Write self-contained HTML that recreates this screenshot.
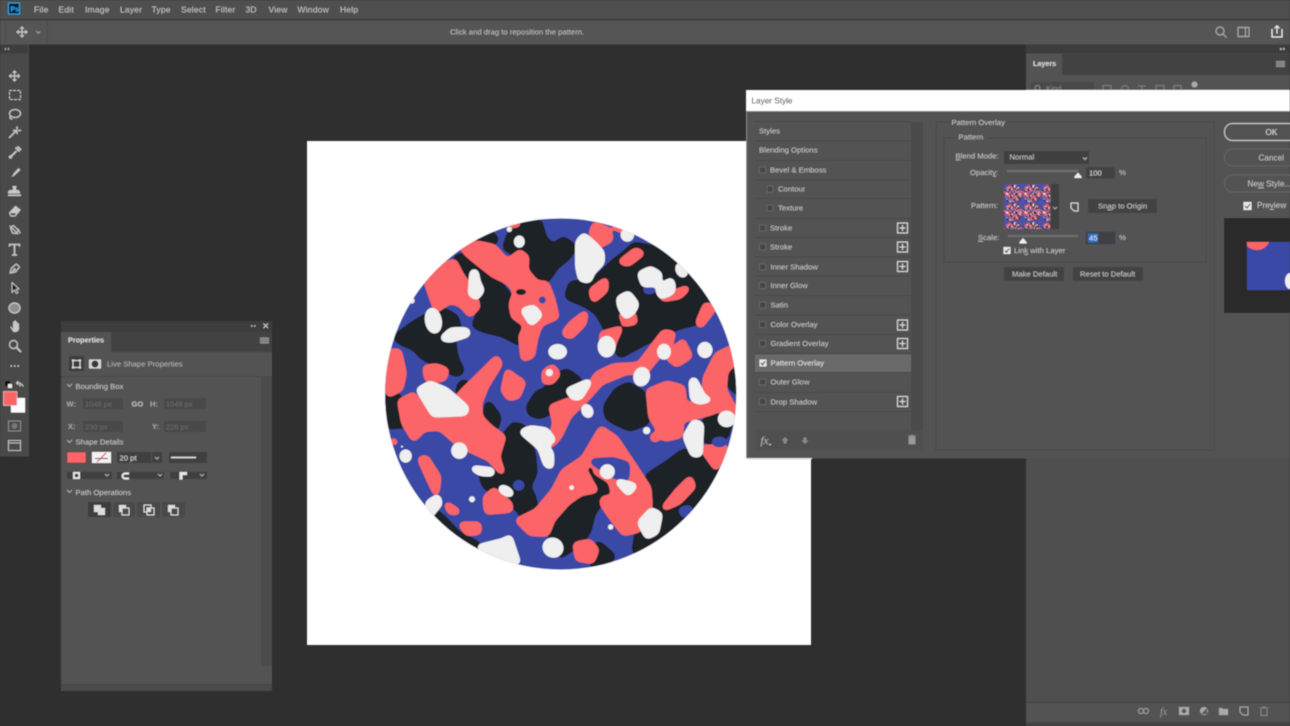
<!DOCTYPE html>
<html><head><meta charset="utf-8"><style>
html,body{margin:0;padding:0;background:#2f2f2f;width:1290px;height:726px;overflow:hidden}
svg{display:block;font-family:"Liberation Sans",sans-serif}
text{font-size:7.7px;fill:#c8c8c8}
.m text{font-size:8.5px;letter-spacing:.2px}
.d{fill:#8a8a8a}
.i{fill:none;stroke:#c8c8c8;stroke-width:1.2;stroke-linejoin:round;stroke-linecap:round}
.f{fill:#c8c8c8}
.k polygon{stroke:#1e2228;fill:#1e2228}
.c polygon{stroke:#fb6567;fill:#fb6567}
.w polygon{stroke:#efefef;fill:#efefef}
.k polygon,.c polygon,.w polygon,.b polygon{stroke-width:14;stroke-linejoin:round}
.b polygon{stroke:#3b4aa6;fill:#3b4aa6}
</style></head><body>
<svg width="1290" height="726" viewBox="0 0 1290 726" xmlns="http://www.w3.org/2000/svg">
<defs>
<clipPath id="cc"><circle cx="542" cy="552" r="527"/></clipPath>
<filter id="goo" filterUnits="userSpaceOnUse" x="-40" y="-40" width="1180" height="1180" color-interpolation-filters="sRGB">
<feGaussianBlur stdDeviation="8"/>
<feColorMatrix type="matrix" values="1 0 0 0 0 0 1 0 0 0 0 0 1 0 0 0 0 0 16 -4.500"/>
</filter>
<filter id="gook" filterUnits="userSpaceOnUse" x="-40" y="-40" width="1180" height="1180" color-interpolation-filters="sRGB">
<feGaussianBlur stdDeviation="9"/>
<feColorMatrix type="matrix" values="1 0 0 0 0 0 1 0 0 0 0 0 1 0 0 0 0 0 16 -3"/>
</filter>
<g id="art">
<rect x="0" y="0" width="1095" height="1095" fill="#3b4aa6"/>
<g class="k" filter="url(#gook)">
<polygon points="392,75 440,42 475,38 490,90 520,115 550,92 578,112 562,138 525,168 500,205 470,215 440,215 425,185 415,130 380,112"/>
<polygon points="285,95 330,72 345,90 300,102"/>
<polygon points="232,145 262,140 302,175 342,210 382,255 398,305 425,342 440,352 418,395 372,370 312,355 288,345 305,300 302,270 272,232 245,192"/>
<polygon points="52,382 95,350 135,325 190,305 225,325 232,355 215,385 220,430 232,468 215,482 172,460 128,436 108,412 62,392"/>
<polygon points="20,565 55,562 62,622 78,642 30,645 18,610"/>
<polygon points="566,258 576,225 605,222 655,205 705,158 735,135 765,108 800,115 860,125 930,185 985,262 958,292 945,335 900,345 850,365 790,395 722,432 705,398 675,340 655,305 622,282"/>
<polygon points="450,592 475,552 500,545 522,505 560,488 595,512 575,530 555,560 528,588 508,602 480,615 455,608"/>
<polygon points="682,590 712,545 745,528 785,552 805,600 795,635 750,652 712,635 686,620"/>
<polygon points="368,692 402,648 428,655 436,682 455,732 460,788 440,830 458,868 462,895 430,912 402,878 352,846 318,826 308,795 345,785 362,775 362,720"/>
<polygon points="808,800 862,765 912,728 958,735 1012,795 975,870 920,940 850,1000 768,1022 778,960 805,900 815,860"/>
<polygon points="536,920 575,885 622,858 655,855 655,880 635,908 622,960 600,995 542,1032 512,965"/>
<polygon points="625,768 642,755 652,795 692,815 712,835 718,858 672,858 642,822"/>
<polygon points="975,640 1012,602 1022,556 1055,612 1035,675 1000,695 975,685"/>
<polygon points="1045,472 1075,462 1075,545 1050,520"/>
<polygon points="158,905 185,925 232,975 290,1005 240,1040 170,960"/>
<polygon points="655,1005 695,1040 645,1072 640,1040"/>
<polygon points="244,524 258,520 238,548"/>
<polygon points="325,585 352,622 345,650 322,625"/>
<polygon points="238,470 240,485 225,488"/>
</g>
<g class="c" filter="url(#goo)">
<polygon points="248,112 292,102 340,112 382,158 420,128 438,142 435,182 470,222 498,222 514,262 528,320 480,340 465,380 455,436 432,445 425,380 442,345 402,318 396,282 410,245 385,214 342,194 305,165 262,130"/>
<polygon points="142,218 182,172 222,156 240,192 280,252 292,290 270,312 245,282 210,270 170,298"/>
<polygon points="34,426 56,426 70,490 60,535 28,552 20,520"/>
<polygon points="138,474 170,470 198,482 190,505 150,510 142,505"/>
<polygon points="62,575 100,556 130,594 192,612 252,542 312,484 350,446 358,462 316,530 296,582 298,622 330,654 368,682 350,740 365,785 330,745 240,704 182,652 130,655 102,685 74,640"/>
<polygon points="384,486 394,496 428,518 412,558 388,563 372,540"/>
<polygon points="558,362 582,336 615,312 610,340 572,378 556,372"/>
<polygon points="516,592 560,575 608,562 652,494 702,470 778,466 802,434 852,368 878,372 864,408 826,446 796,484 740,484 662,516 618,566 566,616 538,676 522,696 506,706 528,640"/>
<polygon points="668,372 718,358 702,392 692,425 668,425"/>
<polygon points="808,544 862,522 906,534 912,590 975,575 978,505 1012,436 1055,415 1068,452 1035,482 1030,540 1062,598 1048,632 1018,585 1005,602 950,618 902,628 900,675 855,685 815,620"/>
<polygon points="866,442 908,396 928,438 890,462"/>
<polygon points="956,338 978,286 1000,295 962,345"/>
<polygon points="725,155 768,122 784,130 745,160"/>
<polygon points="636,242 676,212 675,240 642,268"/>
<polygon points="645,45 685,62 690,88 660,104 636,72"/>
<polygon points="846,262 920,236 898,258 855,265"/>
<polygon points="726,315 755,306 764,335 735,340"/>
<polygon points="416,932 472,904 522,844 552,786 612,746 664,658 706,686 766,776 804,834 808,890 776,958 732,968 694,918 668,880 672,866 706,866 694,812 650,786 645,752 605,770 628,812 645,840 602,848 562,876 516,928 500,970 452,968"/>
<polygon points="318,864 342,842 388,882 390,898 322,904"/>
<polygon points="122,748 138,745 174,802 168,848 148,806"/>
<polygon points="202,885 232,905 212,905"/>
<polygon points="246,945 295,945 295,965 262,968"/>
<polygon points="588,1005 628,997 648,1020 635,1052 595,1045"/>
<polygon points="895,842 930,808 938,830 896,874 855,892"/>
<polygon points="968,715 1035,712 1008,772"/>
<polygon points="386,46 415,42"/>
<polygon points="38,692 46,698"/>
<polygon points="705,50 730,62"/>
<polygon points="495,486 518,472 532,492 515,514 495,514"/>
<circle cx="825" cy="682" r="13" fill="#fb6567"/>
<circle cx="365" cy="73" r="6" fill="#fb6567"/>
<circle cx="386" cy="439" r="6" fill="#fb6567"/>
</g>
<g class="b" filter="url(#goo)">
<polygon points="640,755 700,752 740,764 738,805 700,795"/>
<polygon points="800,232 825,238 800,244"/>
<circle cx="487" cy="270" r="10" fill="#3b4aa6"/>
<ellipse cx="416" cy="826" rx="16" ry="14" fill="#3b4aa6"/>
<ellipse cx="1018" cy="696" rx="22" ry="13" fill="#3b4aa6"/>
<polygon points="905,900 930,895 912,915"/>
</g>
<ellipse cx="423" cy="246" rx="15" ry="9" fill="#1e2228"/>
<g class="w" filter="url(#goo)" fill="#efefef">
<polygon points="596,96 612,78 642,104 664,128 664,158 636,186 626,210 604,206 596,170"/>
<polygon points="782,192 812,178 838,194 832,220 792,222"/>
<polygon points="836,240 872,212 878,228 874,246 844,258"/>
<polygon points="718,266 745,252 768,282 758,304 738,318 722,290"/>
<polygon points="278,188 286,186 292,218 304,240 290,260 274,252"/>
<polygon points="432,302 460,294 478,315 455,338"/>
<polygon points="190,385 214,362 260,362 262,372 212,388"/>
<polygon points="118,540 150,522 198,542 258,594 254,608 162,612"/>
<polygon points="566,542 626,516 600,560 582,562"/>
<polygon points="936,514 942,510 972,568 985,568 958,574 940,566"/>
<polygon points="918,680 942,638 962,644 958,732 940,732"/>
<polygon points="428,666 452,656 498,662 518,690 490,702 512,730 512,768 500,764 482,712"/>
<polygon points="282,776 335,782 335,790 302,788"/>
<polygon points="716,816 762,828 745,848"/>
<polygon points="782,938 815,902 838,914 828,965 802,978"/>
<polygon points="145,880 172,862 178,880 150,915"/>
<polygon points="300,1012 372,994 388,984 412,1056 350,1032"/>
<ellipse cx="160" cy="332" rx="22" ry="37" transform="rotate(-10 160 332)"/>
<ellipse cx="533" cy="425" rx="26" ry="20"/>
<ellipse cx="680" cy="410" rx="24" ry="30"/>
<ellipse cx="975" cy="420" rx="20" ry="22"/>
<ellipse cx="852" cy="425" rx="18" ry="22"/>
<ellipse cx="785" cy="500" rx="22" ry="27" transform="rotate(15 785 500)"/>
<ellipse cx="622" cy="603" rx="15" ry="20" transform="rotate(-25 622 603)"/>
<ellipse cx="1040" cy="627" rx="24" ry="22"/>
<circle cx="238" cy="722" r="22"/>
<ellipse cx="77" cy="738" rx="16" ry="18"/>
<ellipse cx="378" cy="843" rx="24" ry="12" transform="rotate(30 378 843)"/>
<circle cx="682" cy="785" r="20"/>
<ellipse cx="905" cy="180" rx="15" ry="22" transform="rotate(-25 905 180)"/>
<circle cx="742" cy="75" r="18"/>
<ellipse cx="418" cy="95" rx="14" ry="17"/>
<ellipse cx="519" cy="1013" rx="29" ry="27" transform="rotate(30 519 1013)"/>
</g>
<g fill="#efefef">
<circle cx="800" cy="662" r="11"/>
<circle cx="388" cy="58" r="8"/>
<circle cx="575" cy="833" r="7"/>
<circle cx="276" cy="868" r="9"/>
<circle cx="692" cy="951" r="8"/>
<circle cx="508" cy="488" r="11"/>
<circle cx="66" cy="710" r="3"/>
<circle cx="95" cy="272" r="9"/>
</g>
</g>
<pattern id="pt" width="18.6" height="18.6" patternUnits="userSpaceOnUse" patternTransform="translate(1004 184)">
<g transform="scale(.017)"><use href="#art"/></g>
</pattern>
<filter id="sf" x="-5%" y="-5%" width="110%" height="110%"><feGaussianBlur stdDeviation=".42"/></filter>
</defs>

<rect width="1290" height="726" fill="#2f2f2f"/>

<g filter="url(#sf)">
<!-- top bars -->
<rect width="1290" height="19" fill="#4f4f4f"/>
<rect y="19" width="1290" height="1.5" fill="#3a3a3a"/>
<rect y="20.5" width="1290" height="24" fill="#545454"/>
<rect x="47" y="22" width="1" height="20" fill="#4c4c4c"/>
<rect x="5" y="22" width="1" height="20" fill="#4c4c4c"/>
<rect x="8.500" y="3" width="11" height="11" fill="#001e36" stroke="#2aa5e0" stroke-width="1"/>
<text x="10.500" y="11.500" style="font-size:7px;font-weight:bold;fill:#31a8ff">Ps</text>
<g class="m">
<text x="34" y="12.500">File</text><text x="58.500" y="12.500">Edit</text><text x="85" y="12.500">Image</text><text x="120" y="12.500">Layer</text><text x="151.500" y="12.500">Type</text><text x="181" y="12.500">Select</text><text x="215.500" y="12.500">Filter</text><text x="245.500" y="12.500">3D</text><text x="268.500" y="12.500">View</text><text x="297.500" y="12.500">Window</text><text x="340" y="12.500">Help</text>
</g>
<g class="i"><path d="M22 27v10M17 32h10M20.500 28.500L22 27l1.500 1.500M20.500 35.500L22 37l1.500-1.500M18.500 30.500L17 32l1.500 1.500M25.500 30.500L27 32l-1.500 1.500"/><path d="M36.500 31.500l1.800 1.800 1.800-1.800" stroke="#999"/></g>
<text x="450" y="34.500" style="fill:#c0c0c0">Click and drag to reposition the pattern.</text>
<g class="i" style="stroke:#a8a8a8"><circle cx="1220" cy="31" r="4"/><path d="M1223 34l3.500 3.500"/><rect x="1238" y="27.500" width="11" height="9"/><path d="M1245.500 27.500v9"/></g>
<path class="i" style="stroke:#eee" d="M1272 29.500v7.500h10v-7.500M1277 33v-7M1274.800 28l2.200-2.200 2.200 2.200"/>

<!-- left toolbar -->
<rect y="44.500" width="29" height="412" fill="#4a4a4a"/>
<rect y="44.500" width="28" height="9" fill="#3c3c3c"/>
<path d="M5 49h1M8 49h1" stroke="#bbb" stroke-width="2"/>
<g class="i">
<path d="M14.500 71v10M9.500 76h10M13 72.500l1.500-1.500 1.500 1.500M13 79.500l1.500 1.500 1.500-1.500M11 74.500L9.500 76l1.500 1.500M18 74.500l1.500 1.500-1.500 1.500"/>
<rect x="9.500" y="90.500" width="11" height="9" stroke-dasharray="2 2" style="stroke-width:1"/>
<ellipse cx="15" cy="113.500" rx="5.500" ry="4"/><path d="M11 116c-2 1-1 3 1 3"/>
<path d="M9.500 137.500l7-7M17 127v2M17 131.500v2M13.500 130.500h2M18.500 130.500h2" stroke-width="1.500"/>
<path d="M10 157.500l6-6M16 148l3 3M18 147l2.500 2.500" stroke-width="1.800"/><circle cx="10.500" cy="157" r="1"/>
<path d="M10 176.500c2 0 3-1 3.500-3l5-5.500 2 2-5.500 5c-1.500 2-3 1.500-5 1.500z" class="f" stroke="none"/>
<path class="f" stroke="none" d="M12.500 186h4l-.5 4h2.500l1.500 2v1.500h-12V192l1.500-2H13zM8 194.500h13v1.500H8z"/>
<path d="M9.500 213l6-6.500 4.500 3.500-5 6h-4z"/><path class="f" stroke="none" d="M10 213l5.500-6.500 4.500 3.500-3 3.500z"/>
<path d="M10 226l8 8M10.500 228l3-2.500 5 5-2.500 3-3.500-.5z"/><path d="M18 229l2 4"/>
<path d="M9.500 246v-1.500h10V246M14.500 244.500V255M12.500 255h4" stroke-width="1.600"/>
<path d="M10 273l1.500-5 5-4 3 3-4 5zM11 273l3-3"/><circle cx="14.500" cy="269.500" r=".8"/>
<path d="M12 282.500l0 10 2.500-2.500 2 3.500 1.500-1-2-3.200 3-.3z" fill="#151515" stroke="#ccc" stroke-width=".9"/>
<ellipse cx="14.500" cy="308" rx="5.500" ry="5" fill="#8f8f8f"/>
</g>
<path class="f" d="M10 327l1-.5 2 2.500v-6.500c0-1.500 1.500-1.500 1.500 0V321c0-1 1.500-1 1.500 0v1.500c0-1 1.500-1 1.500 0v1.500c0-1 1.500-1 1.500 0v4.500c0 2-1.500 3.500-3.500 3.500h-2z"/>
<g class="i"><circle cx="13.500" cy="344.500" r="4"/><path d="M16.500 347.500l4 4" stroke-width="1.800"/></g>
<path d="M10.500 366h1.500M14 366h1.500M17.500 366h1.500" stroke="#d0d0d0" stroke-width="1.500"/>
<rect x="5" y="381" width="5" height="5" fill="#111"/><rect x="8" y="384" width="4" height="4" fill="#eee"/>
<path class="i" d="M17 383h3v3M18 381.500L16.500 383l1.500 1.500M21.500 384l1.500 2"/>
<rect x="11" y="398" width="14" height="14.500" fill="#fff"/>
<rect x="3.500" y="391.500" width="13.500" height="14" fill="#fb6567" stroke="#ddd" stroke-width=".6"/>
<g stroke="#8d8d8d" fill="none"><rect x="8.500" y="421" width="12" height="10"/><circle cx="14.500" cy="426" r="3" fill="#777" stroke="none"/><rect x="8.500" y="440.500" width="12" height="10" stroke="#bbb"/><path d="M8.500 443h12" stroke="#bbb"/></g>

<!-- white canvas -->
<rect x="307" y="141" width="504" height="504" fill="#fff"/>
<g transform="translate(380 210) scale(.3333)"><g clip-path="url(#cc)"><use href="#art"/></g></g>

<!-- properties panel -->
<rect x="61" y="321" width="211" height="370" fill="#535353"/>
<rect x="61" y="321" width="211" height="11" fill="#3c3c3c"/>
<rect x="61" y="332" width="211" height="20" fill="#434343"/>
<rect x="61" y="332" width="50" height="20" fill="#535353"/>
<text x="68" y="342.500" style="font-weight:bold;fill:#dedede;font-size:7.3px">Properties</text>
<rect x="260" y="337.500" width="9" height="6" fill="#919191"/><path d="M260 339.500h9M260 341.500h9" stroke="#555" stroke-width=".5"/>
<path d="M251 326h1.500M254 326h1.500" stroke="#bbb" stroke-width="1.500"/><path d="M263.500 323.500l4.500 4.500M268 323.500l-4.500 4.500" stroke="#ccc"/>
<rect x="61" y="376" width="200" height="1" fill="#4a4a4a"/>
<rect x="261" y="376" width="11" height="290" fill="#4c4c4c"/>
<rect x="61" y="685" width="211" height="6" fill="#4b4b4b"/>
<rect x="61" y="684" width="211" height="1" fill="#444"/>
<rect x="69" y="356" width="15" height="15" fill="#3e3e3e"/>
<path d="M73 360.500h7v7h-7z" fill="none" stroke="#ddd"/><g fill="#ddd"><rect x="72" y="359.500" width="2" height="2"/><rect x="79" y="359.500" width="2" height="2"/><rect x="72" y="366.500" width="2" height="2"/><rect x="79" y="366.500" width="2" height="2"/></g>
<rect x="89" y="359.500" width="12" height="9" fill="#d8d8d8"/><circle cx="95" cy="364" r="3.500" fill="#3a3a3a"/>
<text x="107" y="366.500" style="fill:#b4b4b4">Live Shape Properties</text>
<g fill="none" stroke="#aaa"><path d="M67 384l2.500 2.500L72 384M67 440l2.500 2.500L72 440M67 490l2.500 2.500L72 490"/></g>
<text x="75.500" y="389">Bounding Box</text>
<text x="75.500" y="444.500">Shape Details</text>
<text x="75.500" y="495">Path Operations</text>
<text x="66.500" y="406.500" style="font-weight:bold;fill:#a8a8a8;font-size:7.5px">W:</text>
<rect x="83" y="398" width="40" height="11" fill="#484848"/><text x="85" y="406.500" class="d" style="font-size:7.500px;fill:#6e6e6e">1048 px</text>
<text x="131.500" y="406.500" style="font-weight:bold;fill:#c0c0c0;font-size:7.5px">GO</text>
<text x="150" y="406.500" style="font-weight:bold;fill:#a8a8a8;font-size:7.5px">H:</text>
<rect x="164" y="398" width="42" height="11" fill="#484848"/><text x="166" y="406.500" class="d" style="font-size:7.500px;fill:#6e6e6e">1048 px</text>
<text x="68" y="429" style="font-weight:bold;fill:#a8a8a8;font-size:7.5px">X:</text>
<rect x="83" y="421" width="40" height="11" fill="#484848"/><text x="85" y="429.500" class="d" style="font-size:7.500px;fill:#6e6e6e">230 px</text>
<text x="152" y="429" style="font-weight:bold;fill:#a8a8a8;font-size:7.5px">Y:</text>
<rect x="164" y="421" width="42" height="11" fill="#484848"/><text x="166" y="429.500" class="d" style="font-size:7.500px;fill:#6e6e6e">226 px</text>
<rect x="67" y="452" width="19" height="11" fill="#fb6567" stroke="#3e3e3e" stroke-width=".5"/>
<rect x="92" y="452" width="19" height="11" fill="#f2f2f2"/><path d="M95 458.500h13" stroke="#222"/><path d="M97 462l9-9" stroke="#d22" stroke-width="1"/>
<rect x="117" y="452" width="34" height="11" fill="#414141"/><rect x="152" y="452" width="10" height="11" fill="#414141"/>
<text x="119.500" y="460.500" style="fill:#ddd">20 pt</text>
<path d="M155 457l2 2 2-2M197.500 457l2 2 2-2" fill="none" stroke="#aaa"/>
<rect x="169" y="452" width="38" height="11" fill="#414141"/><path d="M171 457.500h25" stroke="#e8e8e8" stroke-width="1.600"/>
<rect x="67" y="472" width="45" height="7" fill="#414141"/><rect x="117" y="472" width="47" height="7" fill="#414141"/><rect x="170" y="472" width="37" height="7" fill="#414141"/>
<rect x="73" y="472" width="7" height="7" fill="#e8e8e8"/><circle cx="76.500" cy="475.500" r="1.800" fill="#333"/>
<path d="M129 473.500h-4a2 2 0 0 0 0 5h4" fill="none" stroke="#e8e8e8" stroke-width="2"/>
<path d="M187 473.500h-6v6" fill="none" stroke="#e8e8e8" stroke-width="3"/>
<path d="M105 474l2 2 2-2M158 474l2 2 2-2M200 474l2 2 2-2" fill="none" stroke="#aaa"/>
<rect x="88" y="502" width="23" height="15" fill="#3e3e3e"/>
<rect x="113" y="502" width="22" height="15" fill="#484848"/><rect x="137" y="502" width="23" height="15" fill="#484848"/><rect x="162" y="502" width="23" height="15" fill="#484848"/>
<rect x="94" y="505" width="7" height="7" fill="#ddd"/><rect x="98" y="508" width="7" height="7" fill="#ddd"/>
<rect x="119" y="505" width="7" height="7" fill="#ddd"/><rect x="122" y="508" width="7" height="7" fill="#484848" stroke="#ddd"/>
<rect x="144" y="505" width="7" height="7" fill="none" stroke="#ddd"/><rect x="147" y="508" width="7" height="7" fill="#484848" stroke="#ddd"/><rect x="147" y="508" width="4" height="4" fill="#ddd"/>
<rect x="168" y="505" width="7" height="7" fill="#ddd"/><rect x="171" y="508" width="7" height="7" fill="#484848" stroke="#ddd"/>

<!-- layers panel -->
<rect x="1026" y="44" width="264" height="682" fill="#505050"/>
<rect x="1026" y="44.500" width="264" height="9" fill="#3c3c3c"/>
<path d="M1280 49h1.500M1283 49h1.500" stroke="#bbb" stroke-width="2"/>
<rect x="1026" y="54" width="264" height="21" fill="#434343"/>
<rect x="1026" y="54" width="36" height="21" fill="#535353"/>
<text x="1033" y="66" style="font-weight:bold;fill:#dedede;font-size:7.2px">Layers</text>
<rect x="1276" y="61" width="9" height="6" fill="#919191"/><path d="M1276 63h9M1276 65h9" stroke="#555" stroke-width=".5"/>
<rect x="1026" y="75" width="264" height="15" fill="#535353"/>
<rect x="1031" y="82" width="63" height="8" fill="#4a4a4a"/>
<circle cx="1037.500" cy="88" r="2.500" fill="none" stroke="#8f8f8f"/>
<text x="1046" y="91" style="fill:#8f8f8f">Kind</text>
<g fill="none" stroke="#7f7f7f"><rect x="1103" y="85.500" width="8" height="8"/><circle cx="1125" cy="89" r="3.500"/><path d="M1138 86h8M1142 86v6"/><rect x="1156" y="85.500" width="8" height="8"/><rect x="1174" y="85.500" width="7" height="8"/></g>
<circle cx="1194.500" cy="84.500" r="3" fill="#aaa"/>
<rect x="1026" y="702" width="264" height="1" fill="#404040"/>
<rect x="1026" y="703" width="264" height="19" fill="#535353"/>
<rect x="1026" y="722" width="264" height="4" fill="#444"/>
<g class="i" style="stroke:#999"><circle cx="1141" cy="711" r="2.500"/><circle cx="1146" cy="711" r="2.500"/></g>
<text x="1160" y="715" style="font-style:italic;fill:#999;font-size:10px;font-family:'Liberation Serif',serif">fx</text>
<rect x="1179" y="707" width="10" height="8" fill="#aaa"/><circle cx="1184" cy="711" r="2.200" fill="#555"/>
<circle cx="1204" cy="711" r="4" fill="#aaa"/><path d="M1201 714l6-6v6z" fill="#555"/>
<path d="M1219 708h3l1 1h5v6h-9z" fill="#aaa"/>
<path d="M1240 707h8v8h-5l-3-3z" fill="none" stroke="#aaa"/>
<path d="M1260 708h8M1261 709v6.500h6V709M1263 707h2" fill="none" stroke="#888"/>

<!-- dialog -->
<rect x="746" y="90" width="544" height="368.500" fill="#535353"/>
<rect x="746" y="90" width="544" height="21" fill="#fff"/>
<rect x="746" y="111" width="544" height="1" fill="#777"/>
<rect x="746" y="111" width="1" height="347" fill="#888"/>
<rect x="746" y="458" width="66" height="1.500" fill="#ddd"/>
<text x="751.500" y="103.500" style="fill:#000;font-size:8.200px">Layer Style</text>
<rect x="911" y="122" width="12" height="308" fill="#4c4c4c"/>
<rect x="754" y="121" width="157" height="1" fill="#4a4a4a"/>
<rect x="755" y="430" width="168" height="20" fill="#505050"/>
<g fill="#484848"><rect x="755" y="140.500" width="156" height="1"/><rect x="755" y="160" width="156" height="1"/><rect x="755" y="179.500" width="156" height="1"/><rect x="755" y="198" width="156" height="1"/><rect x="755" y="218" width="156" height="1"/><rect x="755" y="237" width="156" height="1"/><rect x="755" y="256.500" width="156" height="1"/><rect x="755" y="275.500" width="156" height="1"/><rect x="755" y="295" width="156" height="1"/><rect x="755" y="314.500" width="156" height="1"/><rect x="755" y="334" width="156" height="1"/><rect x="755" y="353" width="156" height="1"/><rect x="755" y="372" width="156" height="1"/><rect x="755" y="392" width="156" height="1"/><rect x="755" y="411" width="156" height="1"/></g>
<rect x="755" y="354.500" width="156" height="17.500" fill="#6a6a6a"/>
<text x="759" y="133.500">Styles</text>
<text x="759" y="152.500">Blending Options</text>
<text x="770" y="172.500">Bevel &amp; Emboss</text>
<text x="778" y="191.500">Contour</text>
<text x="778" y="210.500">Texture</text>
<text x="770" y="230.500">Stroke</text>
<text x="770" y="249.500">Stroke</text>
<text x="770.500" y="269.500">Inner Shadow</text>
<text x="770.500" y="288">Inner Glow</text>
<text x="770.500" y="307.500">Satin</text>
<text x="770.500" y="327">Color Overlay</text>
<text x="770.500" y="346">Gradient Overlay</text>
<text x="770.500" y="365.500" style="fill:#e4e4e4">Pattern Overlay</text>
<text x="770.500" y="384.500">Outer Glow</text>
<text x="770.500" y="404.500">Drop Shadow</text>
<g fill="#444" stroke="#6d6d6d" stroke-width=".8">
<rect x="759.500" y="167" width="6" height="6"/><rect x="767" y="186" width="6" height="6"/><rect x="767" y="205" width="6" height="6"/><rect x="759.500" y="225" width="6" height="6"/><rect x="759.500" y="244" width="6" height="6"/><rect x="759.500" y="264" width="6" height="6"/><rect x="759.500" y="282.500" width="6" height="6"/><rect x="759.500" y="302" width="6" height="6"/><rect x="759.500" y="321.500" width="6" height="6"/><rect x="759.500" y="340.500" width="6" height="6"/><rect x="759.500" y="379" width="6" height="6"/><rect x="759.500" y="398.500" width="6" height="6"/>
</g>
<rect x="759.500" y="359.500" width="7" height="7" fill="#e8e8e8"/><path d="M761 363l1.500 1.800 2.500-3.600" stroke="#222" fill="none"/>
<g fill="none" stroke="#dcdcdc"><rect x="897.500" y="223" width="10" height="10"/><path d="M902.500 225v6M899.500 228h6"/><rect x="897.500" y="242" width="10" height="10"/><path d="M902.500 244v6M899.500 247h6"/><rect x="897.500" y="261.500" width="10" height="10"/><path d="M902.500 263.500v6M899.500 266.500h6"/><rect x="897.500" y="320" width="10" height="10"/><path d="M902.500 322v6M899.500 325h6"/><rect x="897.500" y="338.500" width="10" height="10"/><path d="M902.500 340.500v6M899.500 343.500h6"/><rect x="897.500" y="396.500" width="10" height="10"/><path d="M902.500 398.500v6M899.500 401.500h6"/></g>
<text x="760.500" y="444" style="font-style:italic;font-size:11px;fill:#bbb;font-family:'Liberation Serif',serif">fx</text><rect x="769" y="444" width="2" height="1" fill="#ddd"/>
<path d="M785 437l3.500 3.500h-2v3h-3v-3h-2zM805 444l3.500-3.500h-2v-3h-3v3h-2z" fill="#8a8a8a"/>
<path d="M909 437h6v7h-6zM908 436h8M910.500 435h3" fill="#999" stroke="#999" stroke-width=".8"/>

<rect x="936" y="122" width="278" height="328" fill="none" stroke="#4a4a4a"/>
<rect x="950" y="118" width="58" height="10" fill="#535353"/>
<text x="951.500" y="125">Pattern Overlay</text>
<rect x="944" y="138" width="262" height="124" fill="none" stroke="#4a4a4a"/>
<rect x="957" y="132" width="30" height="10" fill="#535353"/>
<text x="958.500" y="139.500">Pattern</text>
<text x="955.500" y="158.500"><tspan text-decoration="underline">B</tspan>lend Mode:</text>
<rect x="1004" y="151" width="85" height="13" fill="#404040"/>
<text x="1009.500" y="159.500">Normal</text>
<path d="M1083 157.500l2 2 2-2" fill="none" stroke="#bbb"/>
<text x="970" y="175">Opacit<tspan text-decoration="underline">y</tspan>:</text>
<rect x="1007" y="170" width="71" height="2" fill="#707070"/>
<path d="M1078 172.500l3.500 4v1.500h-7v-1.500z" fill="#eee"/>
<rect x="1086" y="167" width="29" height="11.500" fill="#424242"/>
<text x="1089" y="175.500" style="fill:#ddd">100</text>
<text x="1119" y="175">%</text>
<text x="971" y="208">Pattern:</text>
<rect x="1004" y="184" width="46" height="45" fill="url(#pt)"/>
<rect x="1004" y="184" width="46" height="45" fill="#fb8fa0" opacity=".1"/>
<rect x="1051" y="184" width="8" height="45" fill="#414141"/>
<path d="M1053 207l2 2 2-2" fill="none" stroke="#aaa"/>
<path d="M1071 203h7v8h-4l-3-3z" fill="none" stroke="#ddd"/>
<rect x="1088" y="199" width="69" height="14" fill="#424242"/>
<text x="1098" y="208.500">Sn<tspan text-decoration="underline">a</tspan>p to Origin</text>
<text x="978" y="240"><tspan text-decoration="underline">S</tspan>cale:</text>
<rect x="1008" y="235" width="70" height="2" fill="#707070"/>
<path d="M1023 238l3.500 4v1.500h-7V242z" fill="#eee"/>
<rect x="1086" y="232" width="29" height="12" fill="#3f3f3f" stroke="#3a4a66" stroke-width=".7"/>
<rect x="1088" y="233.500" width="10" height="9" fill="#2a6fbd"/>
<text x="1089" y="240.500" style="fill:#e8e8e8">45</text>
<text x="1119" y="240">%</text>
<rect x="1003.500" y="247" width="7" height="7" fill="#e8e8e8"/><path d="M1005 250.500l1.500 1.800 2.500-3.600" stroke="#222" fill="none"/>
<text x="1014" y="253">Lin<tspan text-decoration="underline">k</tspan> with Layer</text>
<rect x="1004" y="267" width="60" height="14" fill="#424242"/>
<text x="1012" y="276.500">Make Default</text>
<rect x="1073" y="267" width="70" height="14" fill="#424242"/>
<text x="1080" y="276.500">Reset to Default</text>

<rect x="1224.500" y="123.500" width="80" height="17" rx="8" fill="#535353" stroke="#cfcfcf"/>
<rect x="1224.500" y="149" width="80" height="17" rx="8" fill="#535353" stroke="#666"/>
<rect x="1224.500" y="175" width="80" height="17" rx="8" fill="#535353" stroke="#666"/>
<text x="1265.500" y="135" style="fill:#e0e0e0;font-size:8.200px">OK</text>
<text x="1258.500" y="160.500" style="font-size:8.200px">Cancel</text>
<text x="1247.500" y="186.500" style="font-size:8.200px">Ne<tspan text-decoration="underline">w</tspan> Style...</text>
<rect x="1243.500" y="202" width="8" height="8" fill="#e8e8e8"/><path d="M1245 206l2 2 3-4" stroke="#222" fill="none"/>
<text x="1257" y="208" style="font-size:8.200px">Pre<tspan text-decoration="underline">v</tspan>iew</text>
<rect x="1224" y="218" width="66" height="95" fill="#2b2b2b"/>
<rect x="1247" y="242" width="43" height="48" fill="#3b4aa6"/>
<path d="M1247 242h22c-2 5-7 8-12 8-4 0-8-2-10-4z" fill="#fb6567"/>
<ellipse cx="1290" cy="281" rx="5" ry="8" fill="#efefef"/>
</g>
</svg>
</body></html>
